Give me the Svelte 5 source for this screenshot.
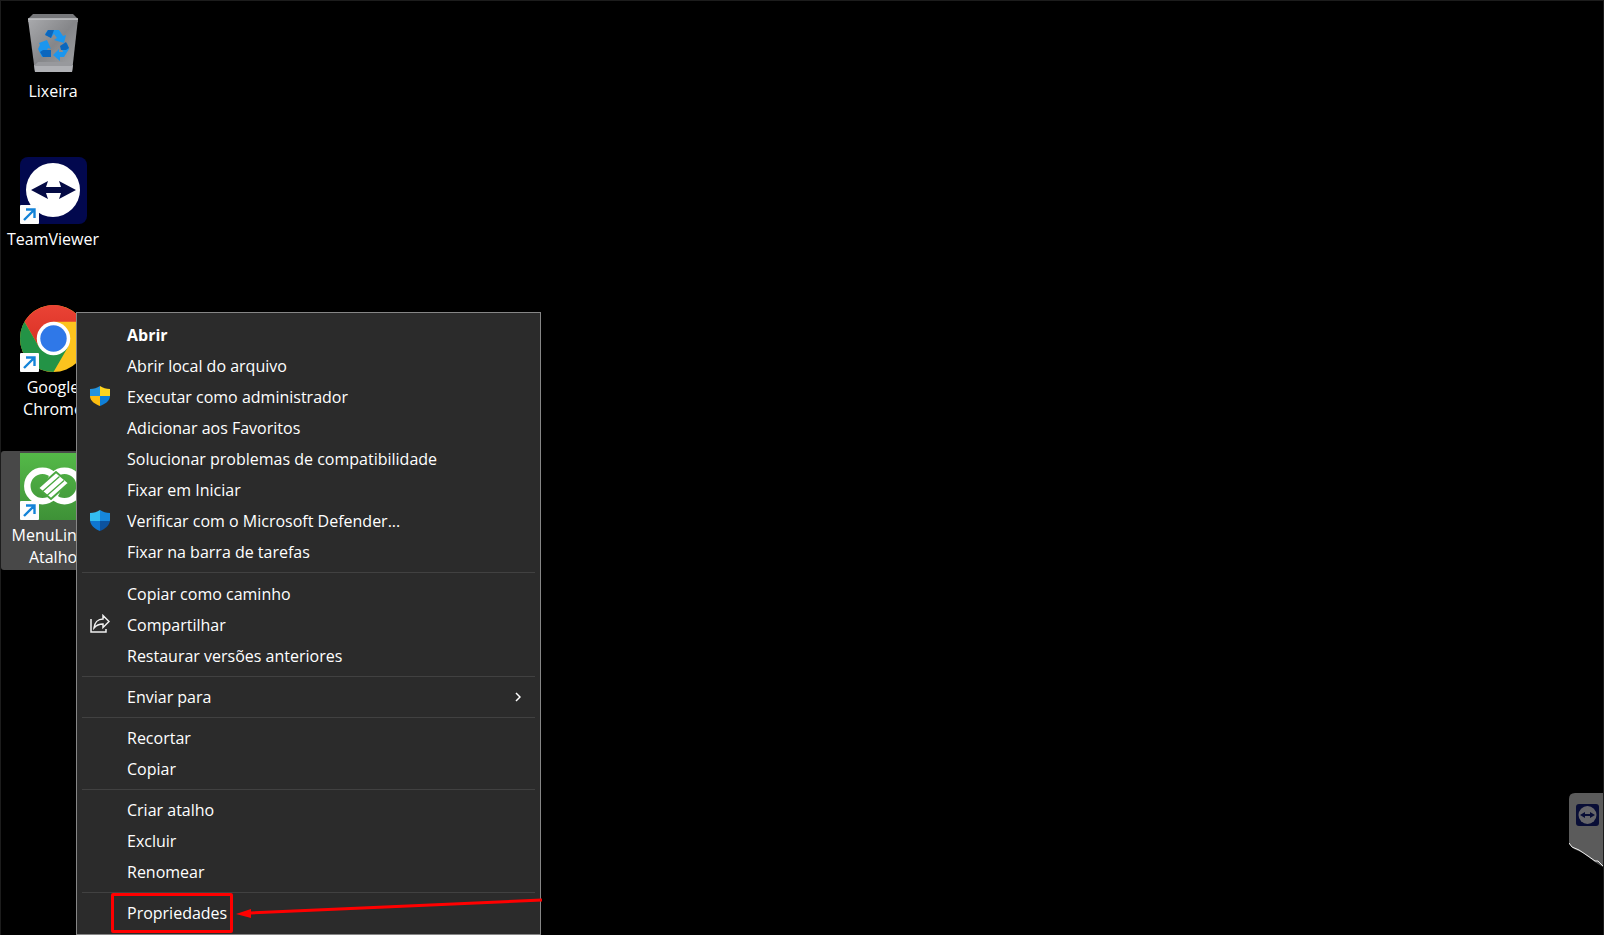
<script>
  const shortcuts = [
    { id: 'bin', lines: ['Lixeira'], linked: false },
    { id: 'teamviewer', lines: ['TeamViewer'], linked: true },
    { id: 'chrome', lines: ['Google', 'Chrome'], linked: true },
    { id: 'menulink', lines: ['MenuLink -', 'Atalho'], linked: true, selected: true }
  ];

  const groups = [
    [
      { label: 'Abrir', strong: true },
      { label: 'Abrir local do arquivo' },
      { label: 'Executar como administrador', icon: 'uac' },
      { label: 'Adicionar aos Favoritos' },
      { label: 'Solucionar problemas de compatibilidade' },
      { label: 'Fixar em Iniciar' },
      { label: 'Verificar com o Microsoft Defender...', icon: 'defender' },
      { label: 'Fixar na barra de tarefas' }
    ],
    [
      { label: 'Copiar como caminho' },
      { label: 'Compartilhar', icon: 'share' },
      { label: 'Restaurar versões anteriores' }
    ],
    [{ label: 'Enviar para', submenu: true }],
    [{ label: 'Recortar' }, { label: 'Copiar' }],
    [{ label: 'Criar atalho' }, { label: 'Excluir' }, { label: 'Renomear' }],
    [{ label: 'Propriedades', marked: true }]
  ];
</script>

<main class="desktop">
  <div class="icons">
    {#each shortcuts as s}
      <button class="shortcut" class:selected={s.selected}>
        <span class="art">
          {#if s.id === 'bin'}
            <svg viewBox="0 0 67 67" aria-hidden="true">
              <defs>
                <linearGradient id="binFace" x1="0" y1="0" x2="1" y2="1">
                  <stop offset="0" stop-color="#a9aaad" />
                  <stop offset="0.5" stop-color="#858689" />
                  <stop offset="1" stop-color="#a4a5a8" />
                </linearGradient>
              </defs>
              <path d="M13 5h40l5 5v3H8v-3z" fill="#77787b" />
              <path d="M8 10h50l-6 53H15z" fill="url(#binFace)" />
              <path d="M8 10h50" stroke="#c3c4c7" stroke-width="1.3" />
              <path d="M14 56h39l-1 7H15z" fill="#b0b1b5" />
              <path d="M14 57l4-4h31l4 4z" fill="#98999d" />
              <path d="M28 21h11l4 6 3-1-2 8-10-3 3-2-3-4-3 4-6-4z" fill="#1b96ee" />
              <path d="M28 21h6l-3 8-6-3z" fill="#0b66bd" />
              <path d="M19 34l8-3 4 9-3-1-2 4v5h-4l-4-8 2-4z" fill="#1b96ee" />
              <path d="M23 41h8v7h-8l-3-5z" fill="#0b66bd" />
              <path d="M41 37l6-3 2 6-5 8h-4v4l-7-6 6-6v3h4z" fill="#1b96ee" />
              <path d="M40 37l6-4 3 6-3 2-5 0z" fill="#0b66bd" />
            </svg>
          {:else if s.id === 'teamviewer'}
            <svg viewBox="0 0 67 67" aria-hidden="true">
              <rect width="67" height="67" rx="8" fill="#02084e" />
              <circle cx="33" cy="33" r="27" fill="#fff" />
              <path d="M11 33l17-9-2 6h15l-2-6 17 9-17 9 2-6H26l2 6z" fill="#040a44" />
            </svg>
          {:else if s.id === 'chrome'}
            <svg viewBox="0 0 67 67" aria-hidden="true">
              <defs>
                <linearGradient id="chromeRed" x1="0" y1="0" x2="0" y2="1">
                  <stop offset="0" stop-color="#ea4335" />
                  <stop offset="1" stop-color="#d93025" />
                </linearGradient>
              </defs>
              <circle cx="33.5" cy="33.5" r="33.5" fill="#fcc31e" />
              <path d="M4.500 16.750A33.500 33.500 0 0 1 62.500 16.750H33.500L19 42z" fill="url(#chromeRed)" />
              <path d="M4.500 16.750A33.500 33.500 0 0 0 33.500 67L48 41.900H19z" fill="#239346" />
              <circle cx="33.500" cy="33.500" r="16.750" fill="#fff" />
              <circle cx="33.500" cy="33.500" r="13.200" fill="#2f78e8" />
            </svg>
          {:else}
            <svg viewBox="0 0 67 67" aria-hidden="true">
              <defs>
                <linearGradient id="mlGreen" x1="0" y1="0" x2="0" y2="1">
                  <stop offset="0" stop-color="#54b948" />
                  <stop offset="1" stop-color="#3e9137" />
                </linearGradient>
              </defs>
              <rect width="67" height="67" fill="url(#mlGreen)" />
              <g fill="none" stroke="#fff" stroke-width="6.500">
                <circle cx="22.500" cy="33" r="15.200" />
                <circle cx="44.500" cy="33" r="15.200" />
              </g>
              <path d="M18 35L36 19 49 30 31 46z" fill="#fff" stroke="#4aa740" stroke-width="2" />
              <path d="M22.500 38.500l17-15M27 42.500l17-15" stroke="#4aa740" stroke-width="1.300" />
            </svg>
          {/if}
          {#if s.linked}
            <svg class="badge" viewBox="0 0 19 19" aria-hidden="true">
              <rect width="19" height="19" rx="1" fill="#fdfdfd" />
              <path d="M4 15L14 5M6 4.500H14.500V13" fill="none" stroke="#1383d8" stroke-width="2.400" />
            </svg>
          {/if}
        </span>
        <span class="name">
          {#each s.lines as line}<span>{line}</span>{/each}
        </span>
      </button>
    {/each}
  </div>

  <div class="menu" role="menu">
    {#each groups as group, g}
      {#if g > 0}<hr />{/if}
      {#each group as item}
        <button class="item" class:strong={item.strong} role="menuitem">
          <span class="glyph">
            {#if item.icon === 'uac'}
              <svg viewBox="0 0 20 20" aria-hidden="true">
                <clipPath id="uacShape">
                  <path d="M10 0C7 2 4 3 0 3v7c0 5 5 8 10 10 5-2 10-5 10-10V3c-4 0-7-1-10-3z" />
                </clipPath>
                <g clip-path="url(#uacShape)">
                  <path d="M0 0h10v10H0z" fill="#2493dc" />
                  <path d="M10 0h10v10H10z" fill="#ffd51e" />
                  <path d="M0 10h10v10H0z" fill="#fdbd10" />
                  <path d="M10 10h10v10H10z" fill="#0f80d8" />
                </g>
              </svg>
            {:else if item.icon === 'defender'}
              <svg viewBox="0 0 20 21" aria-hidden="true">
                <clipPath id="defShape">
                  <path d="M10 0C7 2 4 3 0 3v7c0 5 5 9 10 11 5-2 10-6 10-11V3c-4 0-7-1-10-3z" />
                </clipPath>
                <g clip-path="url(#defShape)">
                  <path d="M0 0h10v11H0z" fill="#33bdf0" />
                  <path d="M10 0h10v11H10z" fill="#1687dc" />
                  <path d="M0 11h10v10H0z" fill="#0e76d0" />
                  <path d="M10 11h10v10H10z" fill="#0c529e" />
                </g>
              </svg>
            {:else if item.icon === 'share'}
              <svg viewBox="0 0 20 20" aria-hidden="true" fill="none" stroke="#f0f0f0" stroke-width="1.500">
                <path d="M1 5v13h15v-3" />
                <path d="M13 1.500l6 6-6 6v-3.500c-4 0-6.500 1-9 4 0.500-5.500 4-9 9-9z" />
              </svg>
            {/if}
          </span>
          {#if item.marked}
            <span class="marked">
              {item.label}
              <span class="frame"></span>
              <svg class="pointer" viewBox="0 0 306 24" aria-hidden="true">
                <path d="M14 17L306 4" stroke="#f00" stroke-width="3" />
                <path d="M0 18l15-5v9z" fill="#f00" />
              </svg>
            </span>
          {:else}
            <span>{item.label}</span>
          {/if}
          {#if item.submenu}
            <svg class="chevron" viewBox="0 0 6 10" aria-hidden="true">
              <path d="M1 1l4 4-4 4" fill="none" stroke="#fff" stroke-width="1.500" />
            </svg>
          {/if}
        </button>
      {/each}
    {/each}
  </div>

  <button class="dock" aria-label="TeamViewer">
    <svg viewBox="0 0 34 74" aria-hidden="true">
      <path d="M0 6Q0 0 6 0H34V74L26 69 14 60 5 56 0 51z" fill="#5b5b5b" />
      <path d="M0 50l3 4 7 3 9 6 7 5 3 0 5 5" fill="none" stroke="#eee" stroke-width="1" />
      <rect x="7" y="11" width="23" height="22" rx="3" fill="#090e36" />
      <circle cx="18.500" cy="22" r="9" fill="#66666a" />
      <path d="M11 22l5-3v2h5v-2l5 3-5 3v-2h-5v2z" fill="#090e36" />
    </svg>
  </button>
</main>

<style>
  :global(body) {
    margin: 0;
    background: #000;
  }

  .desktop {
    position: relative;
    box-sizing: border-box;
    min-height: 100vh;
    padding-top: 6px;
    overflow: hidden;
    border: 1px solid #1c1c1c;
    border-bottom: 0;
    background: #000;
    color: #fff;
    font-family: 'Open Sans', 'Noto Sans', sans-serif;
    font-size: 16px;
  }

  button {
    margin: 0;
    border: 0;
    background: none;
    color: inherit;
    font: inherit;
  }

  .icons {
    display: grid;
    grid-auto-rows: 148px;
    align-items: start;
    justify-content: start;
  }

  .shortcut {
    display: flex;
    flex-direction: column;
    align-items: center;
    gap: 4px;
    width: 104px;
    min-height: 119px;
    padding: 2px 0 0;
    border-radius: 3px;
  }

  .selected {
    background: #484848;
  }

  .art {
    position: relative;
    width: 67px;
    height: 67px;
  }

  .art svg {
    display: block;
    width: 100%;
  }

  .art .badge {
    position: absolute;
    left: 0;
    bottom: 0;
    width: 19px;
  }

  .name {
    display: flex;
    flex-direction: column;
    line-height: 22px;
    white-space: nowrap;
  }

  .menu {
    position: absolute;
    left: 75px;
    top: 311px;
    box-sizing: border-box;
    width: 465px;
    padding: 6px 5px;
    border: 1px solid #868686;
    background: #2b2b2b;
  }

  .item {
    display: flex;
    align-items: center;
    width: 100%;
    height: 31px;
    padding: 0 14px 0 8px;
    text-align: left;
    white-space: nowrap;
  }

  .strong {
    font-weight: 700;
  }

  .glyph {
    flex: none;
    width: 37px;
    height: 21px;
  }

  .glyph svg {
    display: block;
    width: 20px;
  }

  hr {
    height: 1px;
    margin: 5px 0 4px;
    border: 0;
    background: #414141;
  }

  .item + hr:first-of-type {
    margin-bottom: 5px;
  }

  .chevron {
    width: 6px;
    margin-left: auto;
  }

  .marked {
    position: relative;
  }

  .frame {
    position: absolute;
    inset: -9px -6px -9px -16px;
    border: 3px solid #f00;
    border-radius: 2px;
  }

  .pointer {
    position: absolute;
    left: calc(100% + 9px);
    top: -6px;
    width: 306px;
  }

  .dock {
    position: absolute;
    right: 0;
    top: 792px;
    width: 34px;
    padding: 0;
  }

  .dock svg {
    display: block;
  }
</style>
